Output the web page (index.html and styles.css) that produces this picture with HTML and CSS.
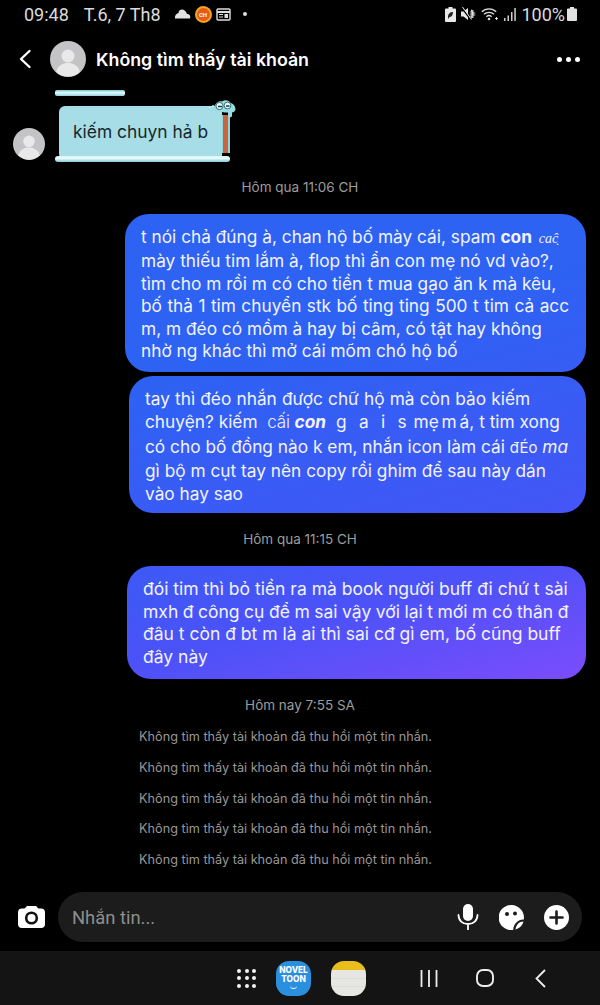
FILE: index.html
```html
<!DOCTYPE html>
<html lang="vi">

<head>
    <meta charset="UTF-8">
    <meta content="width=device-width, initial-scale=1.0" name="viewport">
    <title>Không tìm thấy tài khoản</title>
    <link rel="stylesheet" href="styles.css">
</head>

<body>
<div class="phone">
    <div class="status-bar">
        <span class="clock">09:48</span>
        <span class="date">T.6, 7 Th8</span>
        <svg class="st-cloud" width="17" height="10" viewBox="0 0 17 10"><path d="M1 9.500h15c1-2.500-.5-4.500-3-4.500C12 2 10 .5 8 .5 6 .5 4.500 2 4.500 4 2 4.500.5 7 1 9.500z" fill="#e4e4e4"/></svg>
        <span class="st-badge">CH</span>
        <svg class="st-cal" width="15" height="13" viewBox="0 0 15 13"><rect x="1" y="1" width="13" height="11" rx="1" fill="none" stroke="#ddd" stroke-width="1.400"/><path d="M1 4h13" stroke="#ddd" stroke-width="2"/><path d="M3 6.500h4M3 9h4" stroke="#ddd"/><rect x="8.500" y="6" width="3.500" height="4" fill="#ddd"/></svg>
        <span class="st-dot"></span>
        <span class="st-space"></span>
        <svg width="11" height="15" viewBox="0 0 11 15"><path d="M3.500 0h4v1.500H10a1 1 0 0 1 1 1V14a1 1 0 0 1-1 1H1a1 1 0 0 1-1-1V2.500a1 1 0 0 1 1-1h2.500z" fill="#e8e8e8"/><path d="M3 10c0-3 2-5 5-5 0 3-1.500 5-3.500 5L3 12z" fill="#222"/></svg>
        <svg width="15" height="14" viewBox="0 0 15 14"><path d="M0 4.500h2.500L7 1v12L2.500 9.500H0z" fill="#e8e8e8"/><path d="M1 1l9 12" stroke="#000" stroke-width="1.500"/><path d="M1.500 0l9 12.500" stroke="#e8e8e8" stroke-width="1"/><path d="M10 3l2 1-2 1 3 1-3 1 3 1-3 1 2 1-2 1" fill="none" stroke="#e8e8e8" stroke-width="1.200"/></svg>
        <svg width="18" height="14" viewBox="0 0 18 14"><g fill="none" stroke="#ddd" stroke-width="1.300"><path d="M.8 4.800c4-4 10.400-4 14.400 0"/><path d="M3 7.300c2.800-2.700 7.200-2.700 10 0"/><path d="M5.400 9.700c1.500-1.400 3.700-1.400 5.200 0"/></g><circle cx="8" cy="12" r="1.300" fill="#ddd"/><path d="M14 11.500h3M15.500 10v3" stroke="#ddd"/></svg>
        <svg class="st-signal" width="13" height="13" viewBox="0 0 13 13"><path d="M1 10h1.500v3H1zM4.500 7.500H6V13H4.500zM8 4h1.500v9H8zM11.300 0h1.500v13h-1.500z" fill="#cfcfcf"/></svg>
        <span class="battery-pct">100%</span>
        <svg width="10" height="14" viewBox="0 0 10 14"><path d="M3 0h4v1.500h2a1 1 0 0 1 1 1V13a1 1 0 0 1-1 1H1a1 1 0 0 1-1-1V2.500a1 1 0 0 1 1-1h2z" fill="#e2e2e2"/></svg>
    </div>

    <div class="chat-header">
        <svg class="back" width="14" height="20" viewBox="0 0 14 20"><path d="M11.500 2 3 10l8.500 8" fill="none" stroke="#fff" stroke-width="2.400" stroke-linecap="round" stroke-linejoin="round"/></svg>
        <div class="avatar avatar-big">
            <svg viewBox="0 0 36 36"><circle cx="18" cy="15" r="6.500" fill="#e9e9e9"/><path d="M6 31c2-7 7-9 12-9s10 2 12 9a18 18 0 0 1-24 0z" fill="#e9e9e9"/></svg>
        </div>
        <div class="chat-name">Không tìm thấy tài khoản</div>
        <div class="more"><span></span><span></span><span></span></div>
    </div>

    <div class="thread">
        <div class="reply-stub"></div>
        <div class="incoming">
            <div class="avatar avatar-small">
                <svg viewBox="0 0 36 36"><circle cx="18" cy="15" r="6.500" fill="#e9e9e9"/><path d="M6 31c2-7 7-9 12-9s10 2 12 9a18 18 0 0 1-24 0z" fill="#e9e9e9"/></svg>
            </div>
            <div class="sticker-bubble">
                kiếm chuyn hả b
                <div class="sticker-post"></div>
                <svg class="sticker-dino" width="29" height="18" viewBox="0 0 29 18"><path d="M0 9.500c3 0 5-1 7-1.500C8 3 12 .5 15 1.500c3-2 7-1.500 8.500 1.500 3 .5 5 3.500 5 6.500-.5 2-2 3-3.500 3v4l-2 1-2-1v-4h-3c-2 0-4-1-6-1.500H0z" fill="#9bdbe3"/><circle cx="12.500" cy="6" r="3.600" fill="#eafafb" stroke="#2f6f77"/><circle cx="20.500" cy="5.500" r="3.400" fill="#eafafb" stroke="#2f6f77"/><path d="M11 6.500h4M19 6h3.500" stroke="#173d42" stroke-width="1.500"/><circle cx="3" cy="7.500" r="1" fill="#c8eef2"/><circle cx="6" cy="6" r="1" fill="#c8eef2"/></svg>
                <div class="sticker-base"></div>
            </div>
        </div>

        <div class="timestamp stamp-first">Hôm qua 11:06 CH</div>

        <div class="bubble bubble-a">
            t nói chả đúng à, chan hộ bố mày cái, spam <b>con</b> <span class="script">caĉ̣</span><br>
            mày thiếu tim lắm à, flop thì ẩn con mẹ nó vd vào?,<br>
            tìm cho m rồi m có cho tiền t mua gạo ăn k mà kêu,<br>
            <span class="line-wide">bố thả 1 tim chuyển stk bố ting ting 500 t tim cả acc</span><br>
            m, m đéo có mồm à hay bị câm, có tật hay không<br>
            nhờ ng khác thì mở cái mõm chó hộ bố
        </div>
        <div class="bubble bubble-b">
            <span class="line-wide">tay thì đéo nhắn được chữ hộ mà còn bảo kiếm</span><br>
            chuyện? kiếm &nbsp;<span class="thin">cấi</span> <b><i>con</i></b> <span class="spaced">g a i s</span> <span class="squeezed">mẹ m á,</span> t tim xong<br>
            có cho bố đồng nào k em, nhắn icon làm cái <span class="small">đÉo</span> <i>ma</i><br>
            gì bộ m cụt tay nên copy rồi ghim để sau này dán<br>
            vào hay sao
        </div>

        <div class="timestamp stamp-second">Hôm qua 11:15 CH</div>

        <div class="bubble bubble-c">
            đói tim thì bỏ tiền ra mà book người buff đi chứ t sài<br>
            <span class="line-narrow">mxh đ công cụ để m sai vậy với lại t mới m có thân đ</span><br>
            đâu t còn đ bt m là ai thì sai cđ gì em, bố cũng buff<br>
            đây này
        </div>

        <div class="timestamp stamp-third">Hôm nay 7:55 SA</div>

        <div class="unsent-list">
            <div>Không tìm thấy tài khoản đã thu hồi một tin nhắn.</div>
            <div>Không tìm thấy tài khoản đã thu hồi một tin nhắn.</div>
            <div>Không tìm thấy tài khoản đã thu hồi một tin nhắn.</div>
            <div>Không tìm thấy tài khoản đã thu hồi một tin nhắn.</div>
            <div>Không tìm thấy tài khoản đã thu hồi một tin nhắn.</div>
        </div>
    </div>

    <div class="composer">
        <svg class="camera" width="27" height="22" viewBox="0 0 27 22"><path d="M9 0h9l2.500 2.500H23a4 4 0 0 1 4 4V18a4 4 0 0 1-4 4H4a4 4 0 0 1-4-4V6.500a4 4 0 0 1 4-4h2.500z" fill="#fff"/><circle cx="13.500" cy="12" r="5.300" fill="none" stroke="#111" stroke-width="2.600"/></svg>
        <div class="input-pill">
            <span class="placeholder">Nhắn tin...</span>
            <svg width="22" height="26" viewBox="0 0 22 26"><rect x="6" y="0" width="10" height="17" rx="5" fill="#fff"/><path d="M1.500 11c0 5.500 4 9 9.500 9s9.500-3.500 9.500-9M11 20v5.500" fill="none" stroke="#fff" stroke-width="1.800" stroke-linecap="round"/></svg>
            <svg width="25" height="25" viewBox="0 0 25 25"><path d="M12.500 0a12.500 12.500 0 0 1 12.300 14.500c-5-.5-10.500 4-10.500 10.300A12.500 12.500 0 1 1 12.500 0z" fill="#fff"/><circle cx="8" cy="9" r="2" fill="#1c1c1c"/><circle cx="16" cy="8.500" r="2" fill="#1c1c1c"/><path d="M24.500 16.500c-4.500 0-7.500 3.500-8 8 3-.8 7-3.500 8-8z" fill="#fff"/></svg>
            <svg width="25" height="25" viewBox="0 0 25 25"><circle cx="12.500" cy="12.500" r="12.500" fill="#fff"/><path d="M12.500 6.500v12M6.500 12.500h12" stroke="#1c1c1c" stroke-width="2.600" stroke-linecap="round"/></svg>
        </div>
    </div>

    <div class="nav-bar">
        <div class="app-grid">
            <span></span><span></span><span></span><span></span><span></span><span></span><span></span><span></span><span></span>
        </div>
        <div class="app-novel"><span>NOVEL</span><span>TOON</span><i></i></div>
        <div class="app-notes"></div>
        <svg class="nav-recent" width="18" height="17" viewBox="0 0 18 17"><path d="M1.500 0v17M9 0v17M16.500 0v17" stroke="#eee" stroke-width="1.800"/></svg>
        <svg class="nav-home" width="18" height="18" viewBox="0 0 18 18"><rect x="1" y="1" width="16" height="16" rx="6" fill="none" stroke="#eee" stroke-width="1.900"/></svg>
        <svg class="nav-back" width="11" height="19" viewBox="0 0 11 19"><path d="M10 1 1.500 9.500 10 18" fill="none" stroke="#eee" stroke-width="1.800"/></svg>
    </div>
</div>
</body>

</html>
```

FILE: styles.css
```css
html, body {
    margin: 0;
    padding: 0;
    background-color: #000;
}

.phone {
    width: 600px;
    height: 1005px;
    display: flex;
    flex-direction: column;
    overflow: hidden;
    font-family: Inter, "Noto Sans", sans-serif;
    color: #fff;
}

.status-bar {
    height: 28px;
    display: flex;
    align-items: center;
    gap: 5px;
    padding: 0 23px 0 24px;
    font-family: Roboto, sans-serif;
    font-size: 18px;
    color: #dcdcdc;
}

.date {
    margin-left: 10px;
    margin-right: 8px;
}

.st-badge {
    width: 17px;
    height: 17px;
    margin: 0 -1px;
    border-radius: 50%;
    background-color: #e8591c;
    border: 2px solid #f1a71f;
    box-sizing: border-box;
    font-size: 6px;
    font-weight: 700;
    line-height: 13px;
    text-align: center;
    color: #fff;
}

.st-dot {
    width: 4px;
    height: 4px;
    margin-left: 7px;
    border-radius: 50%;
    background-color: #ddd;
}

.st-space {
    flex: 1;
}

.st-signal {
    margin-left: -1px;
}

.battery-pct {
    margin-right: -3px;
}

.chat-header {
    height: 62px;
    display: flex;
    align-items: center;
    padding: 0 20px 0 18px;
}

.back {
    margin-right: 18px;
}

.avatar {
    flex: none;
    border-radius: 50%;
    background-color: #c4c4c6;
    overflow: hidden;
}

.avatar svg {
    display: block;
    width: 100%;
    height: 100%;
}

.avatar-big {
    width: 36px;
    height: 36px;
}

.avatar-small {
    width: 32px;
    height: 32px;
}

.chat-name {
    flex: 1;
    margin-left: 10px;
    font-size: 17.800px;
    font-weight: 600;
    white-space: nowrap;
}

.more {
    display: flex;
    gap: 4px;
}

.more span {
    width: 5px;
    height: 5px;
    border-radius: 50%;
    background-color: #fff;
}

.thread {
    flex: 1;
    min-height: 0;
}

.reply-stub {
    width: 70px;
    height: 6px;
    margin-left: 55px;
    border-radius: 2px;
    background: linear-gradient(#7cc6d2, #e6fafb 45%, #8fd3dc);
}

.incoming {
    display: flex;
    align-items: flex-end;
    gap: 14px;
    margin: 10px 0 0 13px;
}

.sticker-bubble {
    position: relative;
    width: 163px;
    height: 54px;
    box-sizing: border-box;
    padding-left: 14px;
    border-radius: 6px 4px 4px 6px;
    background-color: #a6dde6;
    color: #17282c;
    font-size: 17.400px;
    line-height: 52px;
    white-space: nowrap;
}

.sticker-post {
    position: absolute;
    left: 163px;
    top: 9px;
    width: 5px;
    height: 38px;
    border-left: 1px solid #8fd3dc;
    border-right: 2px solid #8fd3dc;
    background-color: #c8653e;
}

.sticker-dino {
    position: absolute;
    left: 148px;
    top: -6px;
}

.sticker-base {
    position: absolute;
    left: -4px;
    bottom: -2px;
    width: 175px;
    height: 6px;
    border-radius: 3px;
    background: linear-gradient(#d9f4f7, #eafafb 40%, #7fcbd6);
}

.timestamp {
    font-size: 13.500px;
    line-height: 18px;
    color: #9c9c9c;
    text-align: center;
}

.stamp-first {
    margin-top: 18px;
}

.stamp-second {
    margin-top: 17px;
}

.stamp-third {
    margin-top: 17px;
}

.bubble {
    margin-left: auto;
    margin-right: 14px;
    box-sizing: border-box;
    padding: 12px 16px;
    border-radius: 24px;
    font-size: 17.300px;
    line-height: 22.400px;
    color: #f2f3ff;
    white-space: nowrap;
    background: linear-gradient(165deg, #2d62f3 400px, #3f58f6 600px, #4c52f8 680px, #7c4cfc 809px) fixed;
}

.bubble-a {
    width: 461px;
    height: 158px;
    margin-top: 18px;
}

.bubble-a .line-wide {
    word-spacing: .6px;
}

.bubble-b {
    width: 457px;
    height: 137px;
    margin-top: 4px;
    padding-top: 11px;
    line-height: 23.300px;
}

.bubble-b .line-wide {
    word-spacing: .3px;
}

.bubble-c {
    width: 459px;
    height: 113px;
    margin-top: 18px;
    padding-top: 12px;
    font-size: 17.500px;
    line-height: 22.700px;
}

.line-narrow {
    word-spacing: -.4px;
}

.script {
    font-family: "Liberation Serif", serif;
    font-style: italic;
    font-size: 14px;
    margin-left: 2px;
}

.thin {
    font-size: 17px;
    font-weight: 300;
    letter-spacing: -.2px;
}

.spaced {
    letter-spacing: 2px;
    margin: 0 0 0 5px;
    word-spacing: 3.500px;
}

.squeezed {
    word-spacing: -2px;
}

.small {
    font-size: 15px;
}

.unsent-list {
    margin: 8px 0 0 139px;
    font-size: 12.700px;
    line-height: 30.800px;
    color: #979797;
    white-space: nowrap;
}

.composer {
    display: flex;
    align-items: center;
    gap: 13px;
    padding: 0 18px;
    height: 50px;
    margin-bottom: 9px;
}

.camera {
    flex: none;
}

.input-pill {
    flex: 1;
    height: 50px;
    display: flex;
    align-items: center;
    gap: 20px;
    padding: 0 13px 0 14px;
    border-radius: 25px;
    background-color: #1c1c1c;
}

.placeholder {
    flex: 1;
    font-family: Roboto, sans-serif;
    font-size: 18.400px;
    color: #8e8e8e;
}

.nav-bar {
    height: 54px;
    display: flex;
    align-items: center;
    padding-left: 237px;
    background-color: #141414;
}

.app-grid {
    display: grid;
    grid-template-columns: repeat(3, 4px);
    gap: 3.500px;
    margin-right: 20px;
}

.app-grid span {
    width: 4px;
    height: 4px;
    border-radius: 50%;
    background-color: #f2f2f2;
}

.app-novel {
    width: 35px;
    height: 35px;
    box-sizing: border-box;
    padding-top: 5px;
    border-radius: 13px;
    background-color: #2b8fe0;
    display: flex;
    flex-direction: column;
    align-items: center;
    font-size: 8.300px;
    font-weight: 800;
    line-height: 9.500px;
}

.app-novel i {
    width: 7px;
    height: 3px;
    border-bottom: 1.500px solid #fff;
    border-radius: 0 0 6px 6px;
}

.app-notes {
    width: 35px;
    height: 35px;
    margin: 0 54px 0 20px;
    border-radius: 13px;
    background: linear-gradient(#e8bd1c 9px, #e6e6e2 9px, #e6e6e2 17px, #d4d4cf 17px, #e6e6e2 18px, #e6e6e2 25px, #d4d4cf 25px, #e6e6e2 26px);
}

.nav-recent {
    margin-right: 38px;
}

.nav-home {
    margin-right: 41px;
}
```
